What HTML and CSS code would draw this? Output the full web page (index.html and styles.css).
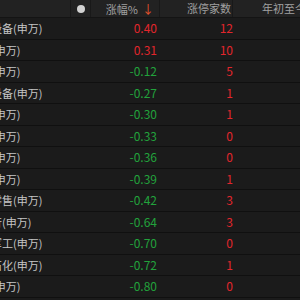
FILE: index.html
```html
<!DOCTYPE html>
<html lang="zh-CN">
<head>
<meta charset="utf-8">
<link rel="stylesheet" href="styles.css">
</head>
<body>
<div class="viewport">
  <div class="table">
    <div class="row head">
      <div class="cell name"></div>
      <div class="cell dot"><span class="circle"></span></div>
      <div class="cell num">涨幅%<span class="arrow">↓</span></div>
      <div class="cell cnt">涨停家数</div>
      <div class="cell ytd">年初至今</div>
    </div>
    <div class="row"><div class="cell name">通信设备(申万)</div><div class="cell dot"></div><div class="cell num up">0.40</div><div class="cell cnt up">12</div><div class="cell ytd"></div></div>
    <div class="row"><div class="cell name">传媒(申万)</div><div class="cell dot"></div><div class="cell num up">0.31</div><div class="cell cnt up">10</div><div class="cell ytd"></div></div>
    <div class="row"><div class="cell name">电子(申万)</div><div class="cell dot"></div><div class="cell num down">-0.12</div><div class="cell cnt up">5</div><div class="cell ytd"></div></div>
    <div class="row"><div class="cell name">机械设备(申万)</div><div class="cell dot"></div><div class="cell num down">-0.27</div><div class="cell cnt up">1</div><div class="cell ytd"></div></div>
    <div class="row"><div class="cell name">钢铁(申万)</div><div class="cell dot"></div><div class="cell num down">-0.30</div><div class="cell cnt up">1</div><div class="cell ytd"></div></div>
    <div class="row"><div class="cell name">煤炭(申万)</div><div class="cell dot"></div><div class="cell num down">-0.33</div><div class="cell cnt up">0</div><div class="cell ytd"></div></div>
    <div class="row"><div class="cell name">建材(申万)</div><div class="cell dot"></div><div class="cell num down">-0.36</div><div class="cell cnt up">0</div><div class="cell ytd"></div></div>
    <div class="row"><div class="cell name">环保(申万)</div><div class="cell dot"></div><div class="cell num down">-0.39</div><div class="cell cnt up">1</div><div class="cell ytd"></div></div>
    <div class="row"><div class="cell name">商贸零售(申万)</div><div class="cell dot"></div><div class="cell num down">-0.42</div><div class="cell cnt up">3</div><div class="cell ytd"></div></div>
    <div class="row"><div class="cell name">农商行(申万)</div><div class="cell dot"></div><div class="cell num down">-0.64</div><div class="cell cnt up">3</div><div class="cell ytd"></div></div>
    <div class="row"><div class="cell name">国防军工(申万)</div><div class="cell dot"></div><div class="cell num down">-0.70</div><div class="cell cnt up">0</div><div class="cell ytd"></div></div>
    <div class="row"><div class="cell name">石油石化(申万)</div><div class="cell dot"></div><div class="cell num down">-0.72</div><div class="cell cnt up">1</div><div class="cell ytd"></div></div>
    <div class="row"><div class="cell name">银行(申万)</div><div class="cell dot"></div><div class="cell num down">-0.80</div><div class="cell cnt up">0</div><div class="cell ytd"></div></div>
  </div>
</div>
</body>
</html>
```
FILE: styles.css
```css
html, body {
  margin: 0;
  padding: 0;
  background: #1b1b1b;
}
body {
  font-family: "Noto Sans CJK SC", "Noto Sans", sans-serif;
  font-size: 11px;
  color: #c6c6c6;
}
.viewport {
  width: 300px;
  height: 300px;
  overflow: hidden;
}
.table {
  margin-left: -31px;
  width: 360px;
}
.row {
  display: grid;
  grid-template-columns: 102px 20px 69px 73px 1fr;
  height: 20.5px;
  border-bottom: 1px solid #101010;
  align-items: center;
  white-space: nowrap;
}
.row.head {
  height: 17px;
  background: #222222;
  border-bottom: 1px solid #141414;
  color: #a0a0a0;
}
.cell {
  line-height: 16px;
  overflow: hidden;
}
.head .cell {
  height: 17px;
  line-height: 17px;
  border-right: 1px solid #191919;
}
.name {
  text-align: left;
}
.dot {
  display: flex;
  align-items: center;
  justify-content: center;
}
.circle {
  width: 8px;
  height: 8px;
  border-radius: 50%;
  background: #d2d2d2;
}
.num {
  text-align: right;
  padding-right: 3px;
  font-size: 12px;
}
.head .num {
  font-size: 11px;
  padding-right: 5px;
}
.arrow {
  color: #e8542c;
  margin-left: 4px;
  font-size: 12px;
}
.cnt {
  text-align: right;
  padding-right: 0;
  font-size: 12px;
}
.head .cnt {
  font-size: 11px;
  padding-right: 1px;
}
.ytd {
  padding-left: 29px;
}
.head .ytd {
  border-right: none;
}
.up {
  color: #e2262c;
}
.down {
  color: #22a23c;
}
```
